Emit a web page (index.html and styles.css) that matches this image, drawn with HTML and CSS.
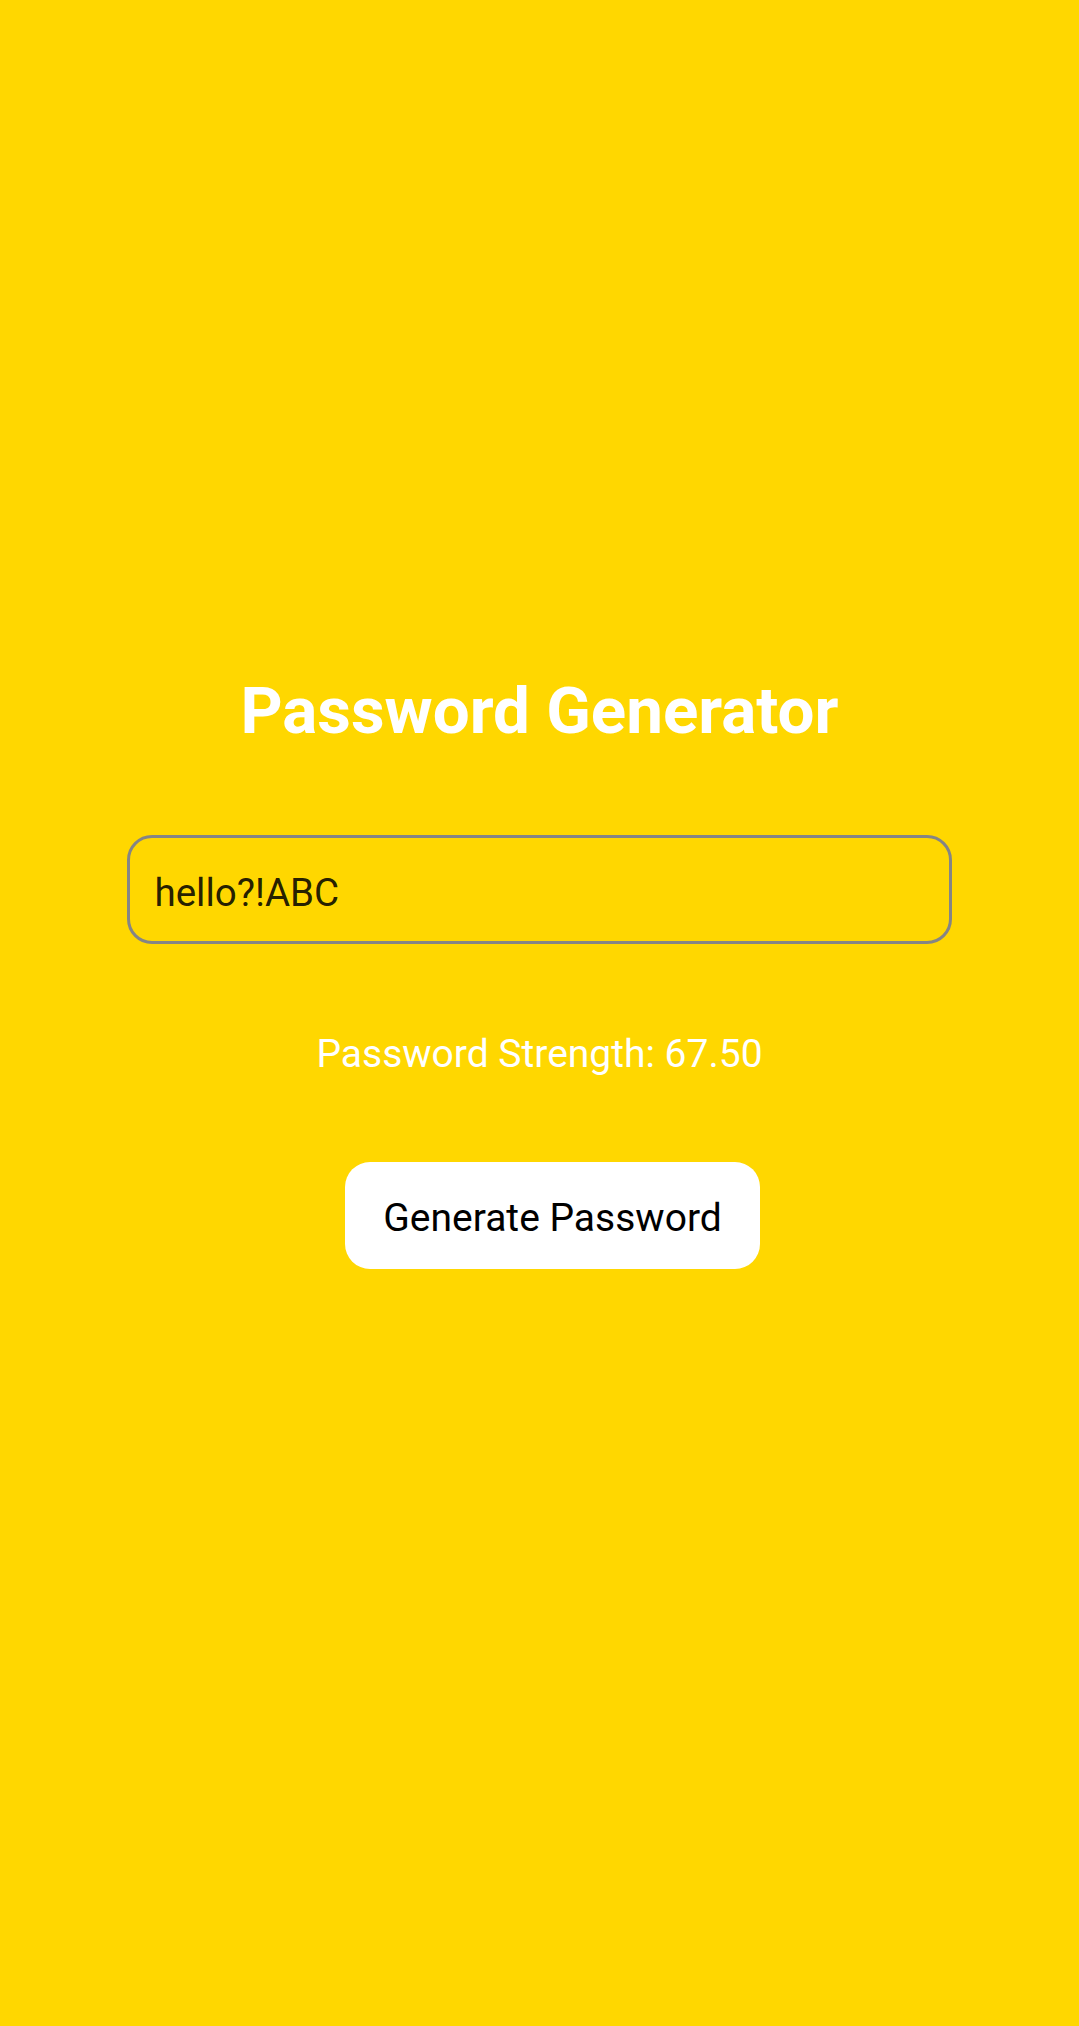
FILE: index.html
```html
<!DOCTYPE html>
<html lang="en">
<head>
<meta charset="utf-8">
<title>Password Generator</title>
<link rel="stylesheet" href="styles.css">
</head>
<body>
<main class="screen">
  <h1 class="title">Password Generator</h1>
  <input class="password-field" type="text" value="hello?!ABC">
  <p class="strength">Password Strength: 67.50</p>
  <button class="generate-btn" type="button">Generate Password</button>
</main>
</body>
</html>
```

FILE: styles.css
```css
html, body {
  margin: 0;
  padding: 0;
  background: #FFD700;
}

body {
  font-family: Roboto, "Noto Sans", sans-serif;
}

.screen {
  box-sizing: border-box;
  width: 1079px;
  height: 2026px;
  padding: 666px 127px 0;
  display: flex;
  flex-direction: column;
  align-items: center;
}

.title {
  margin: 0;
  font-size: 65.5px;
  line-height: 90px;
  font-weight: 700;
  color: #ffffff;
}

.password-field {
  box-sizing: border-box;
  margin-top: 79px;
  width: 825px;
  height: 109px;
  padding: 5px 25px 0 24.5px;
  border: 3px solid #858585;
  border-radius: 25px;
  background: transparent;
  font-family: Roboto, "Noto Sans", sans-serif;
  font-size: 38.5px;
  line-height: 45px;
  color: rgba(0, 0, 0, 0.87);
  outline: none;
}

.strength {
  margin: 88px 0 0;
  font-size: 39px;
  line-height: 45px;
  color: #ffffff;
}

.generate-btn {
  box-sizing: border-box;
  margin: 85px 0 0 26px;
  width: 415px;
  height: 107px;
  padding: 6px 0 0;
  border: none;
  border-radius: 25px;
  background: #ffffff;
  font-family: Roboto, "Noto Sans", sans-serif;
  font-size: 39px;
  line-height: 45px;
  color: #000000;
}
```
